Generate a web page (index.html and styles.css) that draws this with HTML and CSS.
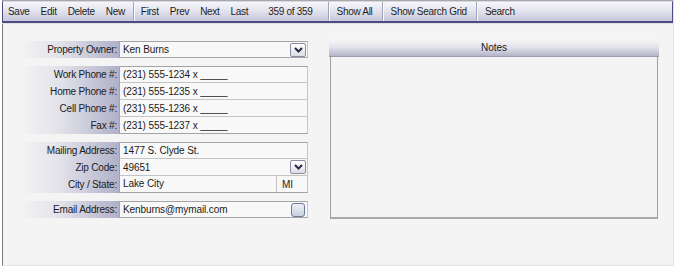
FILE: index.html
```html
<!DOCTYPE html>
<html>
<head>
<meta charset="utf-8">
<link rel="stylesheet" href="styles.css">
</head>
<body>
<div class="frame">
  <div class="toolbar">
    <span class="tb">Save</span><span class="tb">Edit</span><span class="tb">Delete</span><span class="tb">New</span>
    <span class="sep"></span>
    <span class="tb">First</span><span class="tb">Prev</span><span class="tb">Next</span><span class="tb">Last</span>
    <span class="tb count">359 of 359</span>
    <span class="sep"></span>
    <span class="tb wide">Show All</span>
    <span class="sep"></span>
    <span class="tb wide">Show Search Grid</span>
    <span class="sep"></span>
    <span class="tb wide">Search</span>
  </div>
  <div class="content">
    <div class="form">
      <div class="group">
        <div class="labels"><div class="lbl">Property Owner:</div></div>
        <div class="fields">
          <div class="row"><span class="val">Ken Burns</span><span class="drop"><svg width="9" height="6" viewBox="0 0 9 6"><polyline points="1,1 4.5,4.5 8,1" fill="none" stroke="#2a2a48" stroke-width="2"/></svg></span></div>
        </div>
      </div>
      <div class="group">
        <div class="labels">
          <div class="lbl">Work Phone #:</div>
          <div class="lbl">Home Phone #:</div>
          <div class="lbl">Cell Phone #:</div>
          <div class="lbl">Fax #:</div>
        </div>
        <div class="fields">
          <div class="row"><span class="val">(231) 555-1234 x _____</span></div>
          <div class="row"><span class="val">(231) 555-1235 x _____</span></div>
          <div class="row"><span class="val">(231) 555-1236 x _____</span></div>
          <div class="row"><span class="val">(231) 555-1237 x _____</span></div>
        </div>
      </div>
      <div class="group">
        <div class="labels">
          <div class="lbl">Mailing Address:</div>
          <div class="lbl">Zip Code:</div>
          <div class="lbl">City / State:</div>
        </div>
        <div class="fields">
          <div class="row"><span class="val">1477 S. Clyde St.</span></div>
          <div class="row"><span class="val">49651</span><span class="drop"><svg width="9" height="6" viewBox="0 0 9 6"><polyline points="1,1 4.5,4.5 8,1" fill="none" stroke="#2a2a48" stroke-width="2"/></svg></span></div>
          <div class="row"><span class="val city">Lake City</span><span class="val state">MI</span></div>
        </div>
      </div>
      <div class="group">
        <div class="labels"><div class="lbl">Email Address:</div></div>
        <div class="fields">
          <div class="row"><span class="val">Kenburns@mymail.com</span><span class="check"></span></div>
        </div>
      </div>
    </div>
    <div class="notes">
      <div class="notes-head">Notes</div>
      <div class="notes-body"></div>
    </div>
  </div>
</div>
</body>
</html>
```

FILE: styles.css
```css
html, body {
  margin: 0;
  padding: 0;
  background: #ffffff;
  font-family: "Liberation Sans", Arial, sans-serif;
  font-size: 10px;
  color: #1e1e1e;
}

.frame {
  margin-left: 2px;
  width: 670px;
  height: 264px;
  border-left: 1px solid #7a7a7a;
  border-right: 1px solid #e6e6dc;
  border-bottom: 1px solid #e6e6dc;
  border-top: 1px solid #a8a8a8;
  background: #f4f4f4;
  box-sizing: content-box;
}

.toolbar {
  display: flex;
  align-items: center;
  height: 19px;
  margin-left: -1px;
  border-left: 1px solid #4c4c84;
  border-right: 1px solid #4c4c84;
  border-bottom: 2px solid #4c4c84;
  border-top: 1px solid #d8d8e4;
  background: linear-gradient(to bottom, #f6f6fa 0%, #e4e4ee 45%, #c6c6dc 100%);
  width: 669px;
  box-shadow: 0 1px 0 #e0e0e0;
}

.tb {
  padding: 0 5.5px;
  line-height: 19px;
  white-space: nowrap;
  letter-spacing: -0.3px;
}

.tb:first-child { padding-left: 5px; }

.tb.count { padding-left: 14.5px; padding-right: 12.5px; }

.tb.wide { padding: 0 6.5px; }

.sep {
  align-self: stretch;
  width: 1px;
  background: #a4a4bc;
  box-shadow: 1px 0 0 #fafafe;
  margin: 0 1.5px 0 2.5px;
}

.content {
  display: flex;
  align-items: flex-start;
  gap: 21px;
  padding: 16px 0 0 17px;
}

.form {
  display: flex;
  flex-direction: column;
  gap: 8px;
  width: 288px;
  padding-top: 2px;
}

.group {
  display: flex;
}

.labels {
  width: 99px;
  background: linear-gradient(to right, rgba(244,244,244,0) 0%, #e2e2ea 40%, #c6c6d8 75%, #b0b0c8 100%);
}

.lbl {
  height: 17px;
  line-height: 17px;
  text-align: right;
  padding-right: 2px;
  white-space: nowrap;
  letter-spacing: -0.2px;
  color: #202020;
}

.fields {
  flex: 1;
  border: 1px solid #a4a4a4;
  border-right-color: #c8c8c8;
  background: #f8f8f8;
}

.row {
  display: flex;
  align-items: center;
  height: 16px;
  border-top: 1px solid #c4c4c4;
}

.row:first-child {
  border-top: none;
  height: 15px;
}

.val {
  padding-left: 3px;
  flex: 1;
  white-space: nowrap;
  letter-spacing: -0.1px;
  color: #1a1a1a;
}

.val.city {
  flex: 0 0 153px;
  border-right: 1px solid #c4c4c4;
  align-self: stretch;
  line-height: 16px;
}

.val.state {
  padding-left: 5px;
}

.drop {
  width: 14px;
  height: 12px;
  margin-right: 1px;
  border: 1px solid #8c8ca4;
  border-radius: 2px;
  background: linear-gradient(to bottom, #ffffff, #dcdce6);
  display: flex;
  align-items: center;
  justify-content: center;
}

.check {
  width: 12px;
  height: 12px;
  margin-right: 2px;
  border: 1px solid #6c7c98;
  border-radius: 3px;
  background: linear-gradient(to bottom, #eef0f6, #c8d0de);
}

.notes {
  width: 330px;
  display: flex;
  flex-direction: column;
}

.notes-head {
  height: 17px;
  line-height: 17px;
  text-align: center;
  background: linear-gradient(to bottom, #f8f8fa 0%, #e2e2ea 50%, #b4b4ca 100%);
  border-bottom: 1px solid #9a9ab0;
  color: #202020;
}

.notes-body {
  height: 160px;
  border: 1px solid #a0a0a0;
  border-top: none;
  border-bottom: 2px solid #a8a8a8;
  background: #f4f4f4;
  margin: 0 1px;
}
```
